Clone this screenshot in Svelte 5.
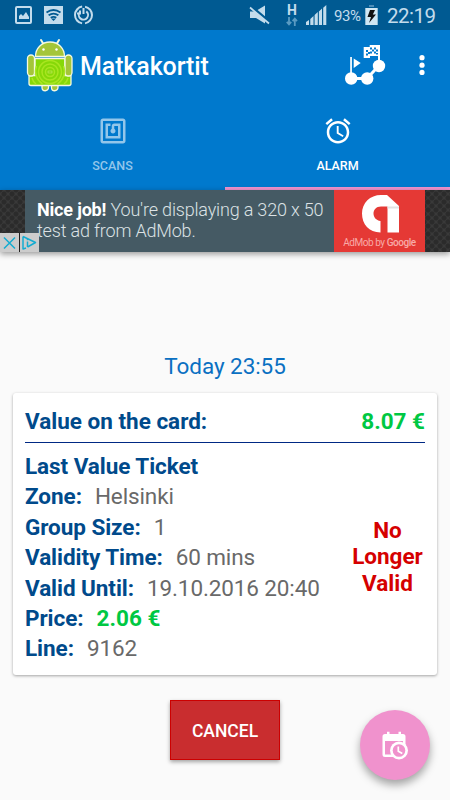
<script>
    let activeTab = "alarm";

    const ticket = [
        { label: "Zone:", value: "Helsinki" },
        { label: "Group Size:", value: "1" },
        { label: "Validity Time:", value: "60 mins" },
        { label: "Valid Until:", value: "19.10.2016 20:40" },
        { label: "Price:", value: "2.06 €", money: true },
        { label: "Line:", value: "9162" },
    ];
</script>

<div class="screen">
    <div class="status">
        <svg class="notifications" width="80" height="20" viewBox="15 5 80 20" fill="none" stroke="#c3dcec">
            <rect x="16" y="7" width="15" height="16" rx="1" stroke-width="2" />
            <path d="M19 19v-3l2-2 2 2 3-4 3 5v2z" fill="#c3dcec" stroke="none" />
            <path d="M44 6h19v18H44z" fill="#c3dcec" stroke="none" />
            <g stroke="#005a92" stroke-width="1.8">
                <path d="M46.5 12.5q7-5 14 0M48.6 15.3q5-3.5 9.8 0M50.7 17.8q3-1.8 5.6 0" />
            </g>
            <path d="M51 18.5h5l-2.5 2.5z" fill="#005a92" stroke="none" />
            <circle cx="83.5" cy="15" r="8.5" stroke-width="2" stroke-dasharray="23.7 3" stroke-dashoffset="12" />
            <path d="M79.8 12.2a4.6 4.6 0 1 0 6.5-.8M80 10.5v3h-3M83.5 8v6" stroke-width="2" />
        </svg>
        <span class="grow"></span>
        <svg class="mute" width="22" height="20" viewBox="250 5 22 20">
            <path d="M251 11.500h5l10-6v18l-9-5.500h-6z" fill="#c3dcec" />
            <path d="M251 5.500l20 17" stroke="#005a92" stroke-width="3" />
            <path d="M251 7.500l19 16" stroke="#c3dcec" stroke-width="1.800" />
        </svg>
        <div class="network">
            <b>H</b>
            <svg width="12" height="9" viewBox="0 0 12 9" fill="none" stroke="#5a9bc2" stroke-width="1.8">
                <path d="M3 0v7M.8 4.8L3 7.3l2.2-2.5M8.8 9V2M6.600 4.200l2.200-2.500L11 4.200" />
            </svg>
        </div>
        <svg class="signal" width="21" height="20" viewBox="0 0 21 20" fill="#c3dcec">
            <path d="M0 20v-3l3-2v5zM4.300 20v-6l3.200-3v9zM8.600 20V10l3.200-3v13zM12.900 20V6.500L16 3.500V20zM17.200 20V2.800L20.300 0v20z" />
        </svg>
        <span class="percent">93%</span>
        <svg class="battery" width="13" height="20" viewBox="0 0 13 20">
            <path d="M4 0h5v2H4z" fill="#4d8db8" />
            <path d="M.3 3h12.400v17H.3z" fill="#d0e7f3" />
            <path d="M5 5h5L7.800 9.500H11L4 18l2-6H2.500z" fill="#111" />
        </svg>
        <span class="time">22:19</span>
    </div>

    <header>
        <svg class="robot" width="48" height="54" viewBox="26 38 48 54">
            <g fill="#a4c639" stroke="#f5f9df" stroke-width="1.3">
                <path d="M41 40l3 5M59 40l-3 5" stroke-width="2" stroke-linecap="round" />
                <path d="M42 82h6.500v5.500a3.200 3.200 0 0 1-6.500 0zM51.500 82H58v5.500a3.200 3.200 0 0 1-6.500 0z" />
                <path d="M35.500 56.500c0-8 6-14.500 14.500-14.500s14.500 6.500 14.500 14.500z" />
                <path d="M35 58.500h30v17h6v8q0 2-2 2H31q-2 0-2-2v-8h6z" fill="#86d809" />
                <rect x="27.5" y="55" width="7" height="21" rx="3.5" />
                <rect x="65" y="55" width="7" height="21" rx="3.5" />
            </g>
            <g fill="none" stroke="#a9e620" stroke-width="1.5">
                <circle cx="50" cy="72" r="4.5" />
                <circle cx="50" cy="72" r="8" />
                <circle cx="50" cy="72" r="11.500" />
                <path d="M36.500 66a15 15 0 0 0 6 18M63.500 66a15 15 0 0 1-6 18M32 78q1 4 4 6M68 78q-1 4-4 6" />
            </g>
            <rect x="48" y="71" width="4" height="2" fill="none" stroke="#caec69" stroke-width=".6" />
            <circle cx="43.5" cy="49.5" r="1.2" fill="#fff" />
            <circle cx="56.5" cy="49.5" r="1.2" fill="#fff" />
        </svg>
        <h1>Matkakortit</h1>
        <span class="grow"></span>
        <svg class="route" width="42" height="42" viewBox="344 44 42 42" fill="#fff">
            <path d="M351 78.500h16l12-13" fill="none" stroke="#fff" stroke-width="3" />
            <circle cx="351.2" cy="78.5" r="6.2" />
            <circle cx="367.2" cy="78.5" r="6.2" />
            <circle cx="379" cy="66" r="6.2" />
            <path d="M350.200 57h1.700v18h-1.700zM353.700 58.500l7 4.500-7 5zM378 45h2v17h-2zM363.700 47h6v-2H380v11h-10v2h-6.300z" />
            <path d="M366 50h2v2h-2zM368 52h2v2h-2zM366 53.500h2v2h-2zM370 47.500h2v2h-2zM372 49.500h2v2h-2zM374 47.500h2v2h-2zM376 49.500h2v2h-2zM370 51.500h2v2h-2zM374 51.500h2v2h-2zM376 53h2v1.500h-2z" fill="#0079cd" />
        </svg>
        <svg class="more" width="6" height="20" viewBox="0 0 6 20" fill="#fff">
            <circle cx="3" cy="2.7" r="2.6" />
            <circle cx="3" cy="10.2" r="2.6" />
            <circle cx="3" cy="17.4" r="2.6" />
        </svg>
    </header>

    <nav>
        <button class="tab" class:active={activeTab === "scans"} on:click={() => (activeTab = "scans")}>
            <svg width="30" height="30" viewBox="0 0 24 24" fill="currentColor">
                <path d="M20 2H4c-1.100 0-2 .9-2 2v16c0 1.100.9 2 2 2h16c1.100 0 2-.9 2-2V4c0-1.100-.9-2-2-2zm0 18H4V4h16v16zM18 6h-5c-1.100 0-2 .9-2 2v2.280c-.6.350-1 .98-1 1.720 0 1.100.9 2 2 2s2-.9 2-2c0-.74-.4-1.380-1-1.720V8h3v8H8V8h2V6H6v12h12V6z" />
            </svg>
            <span>SCANS</span>
        </button>
        <button class="tab" class:active={activeTab === "alarm"} on:click={() => (activeTab = "alarm")}>
            <svg width="30" height="30" viewBox="0 0 24 24" fill="currentColor">
                <path d="M22 5.720l-4.600-3.860-1.290 1.530 4.600 3.860L22 5.720zM7.880 3.390L6.600 1.860 2 5.710l1.290 1.530 4.590-3.850zM12.500 8H11v6l4.750 2.850.75-1.230-4-2.370V8zM12 4c-4.970 0-9 4.030-9 9s4.020 9 9 9c4.970 0 9-4.030 9-9s-4.030-9-9-9zm0 16c-3.870 0-7-3.130-7-7s3.130-7 7-7 7 3.130 7 7-3.130 7-7 7z" />
            </svg>
            <span>ALARM</span>
        </button>
    </nav>

    <div class="ad">
        <div class="ad-text">
            <div><b>Nice job!</b> You're displaying a 320 x 50</div>
            <div>test ad from AdMob.</div>
        </div>
        <div class="admob">
            <svg width="38" height="39" viewBox="0 0 38 39">
                <path d="M19.500 38.500C8 38.500 1 30 1 19.500S9 1 20 1h6l12 11v26.500H26.500V12.500H20c-5 0-7.500 3.500-7.500 7s2.500 7 7 7.500z" fill="#fff" />
                <path d="M26.500 12.500H38v2H26.500z" fill="#e3e3e3" />
            </svg>
            <span>AdMob by <b>Google</b></span>
        </div>
        <svg class="ad-choices" width="39" height="19" viewBox="0 0 39 19">
            <path d="M0 0h39v19H0z" fill="#ccc" />
            <path d="M19 0h1v19h-1z" fill="#222" />
            <g fill="none" stroke="#15acd1" stroke-width="1.5">
                <path d="M4 4.500l11 11M15 4.500l-11 11" />
                <path d="M23 3.500v12.500l3-1M23 3.500l12.500 6-8 4.500" stroke-linejoin="round" />
                <path d="M27.500 5.700v1.500M27.500 8.500v5.500" />
            </g>
        </svg>
    </div>

    <main>
        <h2>Today 23:55</h2>
        <section class="card">
            <div class="balance">
                <span>Value on the card:</span>
                <span class="money">8.07 €</span>
            </div>
            <div class="details">
                <div class="rows">
                    <div class="label">Last Value Ticket</div>
                    {#each ticket as row}
                        <div><span class="label">{row.label}</span><span class="value" class:money={row.money}>{row.value}</span></div>
                    {/each}
                </div>
                <div class="expired">No<br />Longer<br />Valid</div>
            </div>
        </section>
        <button class="cancel">CANCEL</button>
    </main>

    <button class="fab" aria-label="Schedule alarm">
        <svg width="26" height="29" viewBox="0 0 26 29">
            <path d="M3 3h2V.8h2.500V3h9V.8H19V3h2q2.500 0 2.500 2.500v19q0 1.500-2.500 1.500H3Q.5 26 .5 23.500v-18Q.5 3 3 3zM3 10v13.500h18V10z" fill="#fff" fill-rule="evenodd" />
            <circle cx="17" cy="19.5" r="9" fill="#fff" />
            <circle cx="17" cy="19.5" r="6.3" fill="#f092cd" />
            <path d="M16.300 15.500v4.800l4 2.200" fill="none" stroke="#fff" stroke-width="1.7" />
        </svg>
    </button>
</div>

<style>
    :global(body) {
        margin: 0;
        font-family: Roboto, sans-serif;
    }
    .screen {
        width: 450px;
        height: 800px;
        position: relative;
        overflow: hidden;
        background: #fafafa;
    }
    svg {
        display: block;
        flex: none;
    }
    button {
        border: 0;
        padding: 0;
        font-family: inherit;
    }
    .grow {
        flex: 1;
    }
    .status {
        display: flex;
        box-sizing: border-box;
        height: 30px;
        padding: 0 14px 0 15px;
        align-items: center;
        background: #005a92;
        color: #c3dcec;
    }
    .network {
        width: 12px;
        margin-left: 15px;
        font-size: 14px;
        line-height: 12px;
        text-align: center;
    }
    .network b {
        display: block;
        height: 13px;
    }
    .signal {
        margin-left: 8px;
    }
    .percent {
        width: 28px;
        margin-left: 7px;
        padding-top: 1px;
        font-size: 15px;
        letter-spacing: -0.4px;
    }
    .battery {
        margin-left: 3px;
    }
    .time {
        width: 49px;
        margin-left: 9px;
        padding-top: 1px;
        font-size: 20.5px;
        letter-spacing: -0.5px;
    }
    header {
        display: flex;
        box-sizing: border-box;
        height: 70px;
        padding: 0 25px 0 26px;
        align-items: center;
        background: #0079cd;
        color: #fff;
    }
    h1 {
        margin: 0 0 0 6px;
        padding-top: 3px;
        font-size: 25px;
        font-weight: 500;
        letter-spacing: -0.1px;
    }
    .more {
        margin-left: 33px;
    }
    nav {
        display: flex;
        height: 90px;
        background: #0079cd;
    }
    .tab {
        display: flex;
        flex: 1;
        box-sizing: border-box;
        flex-direction: column;
        align-items: center;
        padding-top: 16px;
        border-bottom: 3px solid transparent;
        background: none;
        color: #93c6ea;
        font-size: 12.5px;
        font-weight: 500;
    }
    .tab span {
        margin-top: 12px;
    }
    .tab.active {
        border-color: #f092cd;
        color: #fff;
    }
    .ad {
        display: flex;
        position: relative;
        box-sizing: border-box;
        height: 62px;
        padding: 0 25px;
        background-color: #393939;
        background-image: radial-gradient(circle, #2b2b2b 2px, transparent 3px), radial-gradient(circle, #2b2b2b 2px, transparent 3px);
        background-position: 0 0, 4px 4px;
        background-size: 8px 8px;
        box-shadow: 0 2px 6px rgba(0, 0, 0, 0.4);
    }
    .ad-text {
        flex: 1;
        padding: 9px 0 0 12px;
        background: #455a64;
        color: #dce2e5;
        font-size: 18px;
        font-weight: 300;
        line-height: 21px;
        letter-spacing: -0.18px;
        white-space: nowrap;
    }
    .ad-text b {
        color: #fff;
        font-weight: 700;
    }
    .admob {
        display: flex;
        width: 91px;
        flex-direction: column;
        align-items: center;
        padding-top: 4px;
        box-sizing: border-box;
        background: #e53935;
        color: #f8aaa7;
        font-size: 10px;
        line-height: 20px;
        letter-spacing: -0.45px;
        white-space: nowrap;
    }
    .admob b {
        font-weight: 500;
    }
    .ad-choices {
        position: absolute;
        left: 0;
        bottom: 0;
    }
    main {
        display: flex;
        flex-direction: column;
        align-items: center;
        padding: 100px 13px 0;
    }
    h2 {
        margin: 0;
        color: #0a70c2;
        font-size: 22.5px;
        font-weight: 400;
        line-height: 28px;
        letter-spacing: -0.05px;
    }
    .card {
        width: 100%;
        height: 282px;
        margin-top: 13px;
        padding: 15px 12px 0;
        box-sizing: border-box;
        border-radius: 3px;
        background: #fff;
        box-shadow: 0 1px 3px rgba(0, 0, 0, 0.35);
        color: #004a8b;
        font-size: 22.5px;
    }
    .balance {
        display: flex;
        justify-content: space-between;
        height: 34px;
        border-bottom: 1px solid #002984;
        font-weight: 700;
        line-height: 27px;
    }
    .details {
        display: flex;
        justify-content: space-between;
        padding-top: 8px;
    }
    .rows {
        line-height: 30.4px;
        white-space: nowrap;
    }
    .label {
        font-weight: 700;
        letter-spacing: -0.06px;
    }
    .value {
        margin-left: 13px;
        color: #696969;
        letter-spacing: -0.12px;
    }
    .money {
        color: #00c843;
        font-weight: 700;
        letter-spacing: 0;
    }
    .expired {
        width: 75px;
        padding-top: 66px;
        color: #d50000;
        font-weight: 700;
        line-height: 26.3px;
        text-align: center;
    }
    .cancel {
        width: 110px;
        height: 60px;
        margin-top: 25px;
        padding-top: 1px;
        border: 1px solid #c00;
        background: #c92d2f;
        box-shadow: 0 2px 4px rgba(0, 0, 0, 0.35);
        color: #fff;
        font-size: 17.5px;
        font-weight: 500;
    }
    .fab {
        display: grid;
        position: absolute;
        right: 20px;
        bottom: 20px;
        width: 70px;
        height: 70px;
        place-items: center;
        border-radius: 50%;
        background: #f092cd;
        box-shadow: 0 5px 9px rgba(0, 0, 0, 0.35);
    }
</style>
